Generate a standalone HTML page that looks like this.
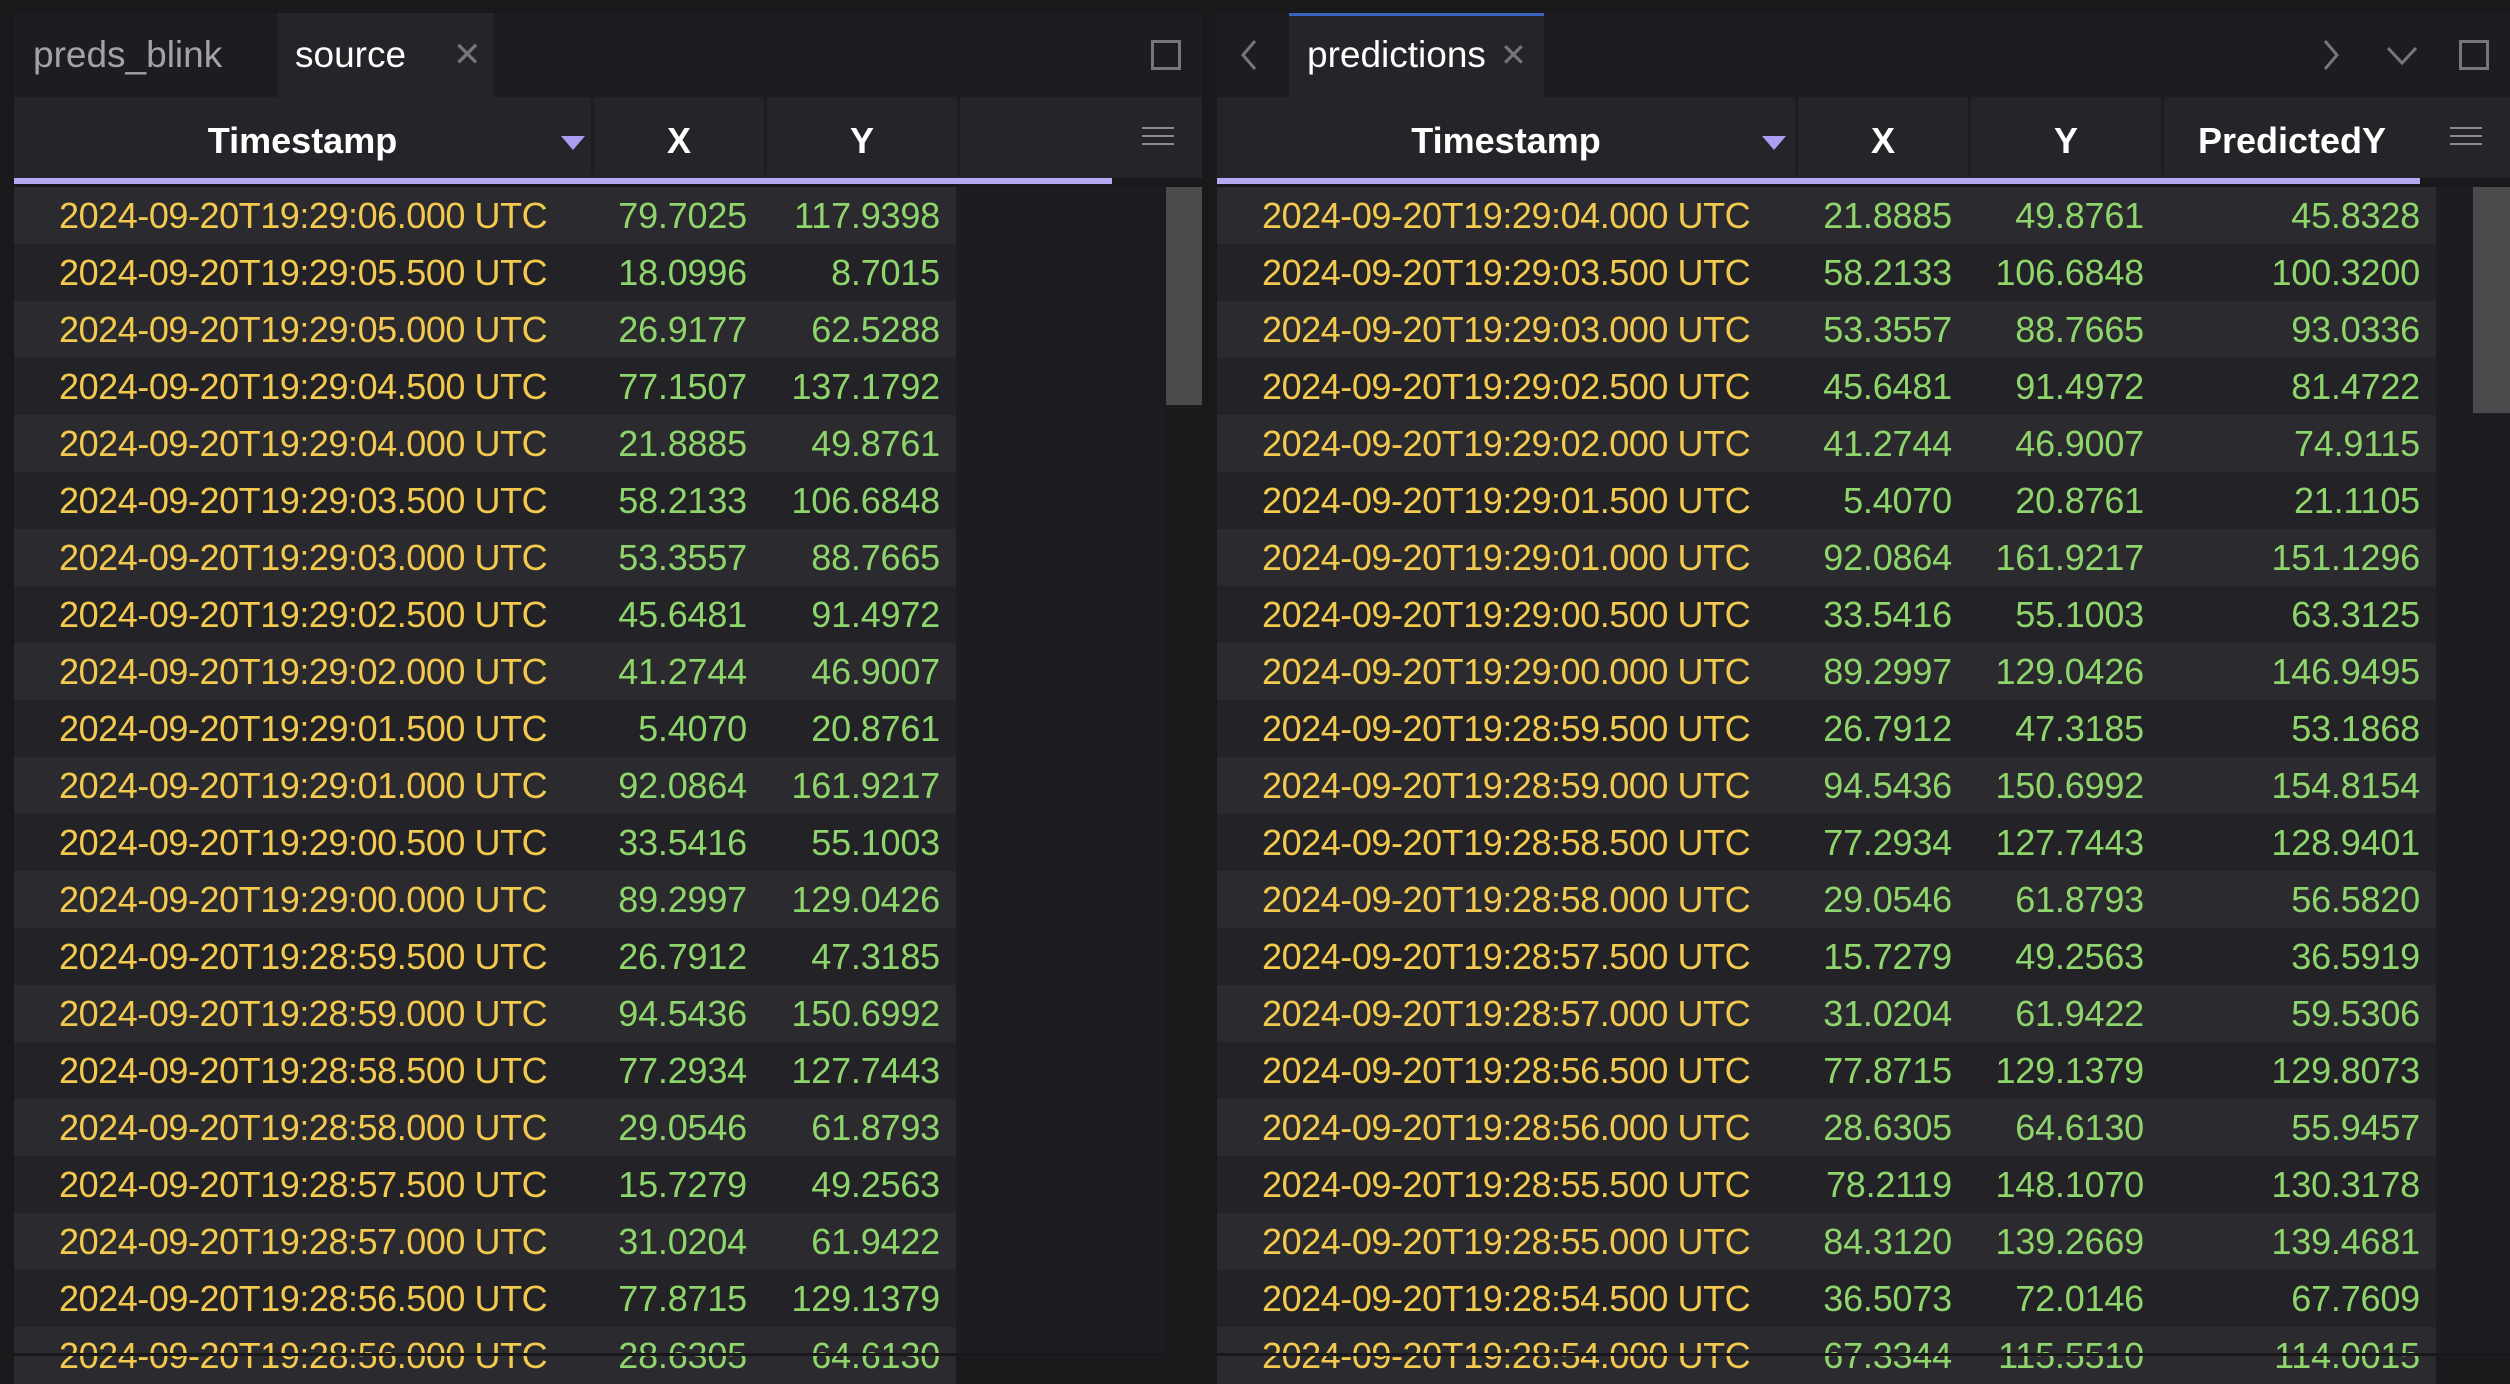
<!DOCTYPE html>
<html><head><meta charset="utf-8"><style>
*{margin:0;padding:0;box-sizing:border-box}
body{width:2510px;height:1356px;background:#19181b;overflow:hidden;font-family:"Liberation Sans",sans-serif;position:relative}
.abs{position:absolute}
.tabrow{top:13px;height:84px;background:#1d1c20}
.tab{top:0;height:84px;line-height:84px;font-size:37px;color:#a3a2a6}
.hdr{top:97px;height:81px;background:#252428}
.hc{position:absolute;top:0;height:78px;line-height:88px;text-align:center;color:#fff;font-weight:bold;font-size:36px;background:#252428;overflow:hidden}
.sep{position:absolute;top:0;width:3px;height:78px;background:#1d1c20}
.lav{position:absolute;top:178px;height:6px;background:#b3a9f2}
.tri{position:absolute;top:136px;width:0;height:0;border-left:12px solid transparent;border-right:12px solid transparent;border-top:14px solid #a99ef0}
.rows{top:187px}
.r{height:57px;line-height:57px;font-size:36px;position:relative;white-space:nowrap}
.r:nth-child(odd){background:#2b2a2e}
.r:nth-child(even){background:#232226}
.r span{position:absolute;top:0}
.t{color:#f3c94e;letter-spacing:-0.45px}
.n{color:#8ed66b;text-align:right;letter-spacing:-0.2px}
.ham{position:absolute;width:32px;height:2px;background:#8a898d}
</style></head><body>
<!-- LEFT PANEL -->
<div class="abs tabrow" style="left:14px;width:1188px"></div>
<div class="abs" style="left:14px;top:13px;width:264px;height:84px;background:#1d1c20"></div>
<div class="abs tab" style="left:33px;top:13px">preds_blink</div>
<div class="abs" style="left:278px;top:13px;width:216px;height:84px;background:#252428"></div>
<div class="abs tab" style="left:295px;top:13px;color:#fff">source</div>
<div class="abs tab" style="left:453px;top:13px;color:#77767a;font-size:34px">✕</div>
<div class="abs" style="left:1151px;top:40px;width:30px;height:30px;border:3px solid #77767a"></div>

<div class="abs hdr" style="left:14px;width:1188px">
<div class="hc" style="left:0;width:577px">Timestamp</div>
<div class="sep" style="left:577px"></div>
<div class="hc" style="left:580px;width:170px">X</div>
<div class="sep" style="left:750px"></div>
<div class="hc" style="left:753px;width:190px">Y</div>
<div class="sep" style="left:943px"></div>
<div class="hc" style="left:946px;width:152px"></div>
</div>
<div class="tri" style="left:561px"></div>
<div class="ham" style="left:1142px;top:127px"></div>
<div class="ham" style="left:1142px;top:135px"></div>
<div class="ham" style="left:1142px;top:143px"></div>
<div class="lav" style="left:14px;width:1098px"></div>
<div class="abs" style="left:956px;top:187px;width:246px;height:1170px;background:#1d1c20"></div>
<div class="abs" style="left:1163px;top:187px;width:39px;height:1170px;background:#1b1a1d"></div>
<div class="abs" style="left:1166px;top:187px;width:36px;height:218px;background:#4b4a4d"></div>

<div class="abs rows" style="left:14px;width:942px">
<div class="r"><span class="t" style="left:45px">2024-09-20T19:29:06.000 UTC</span><span class="n" style="right:209px">79.7025</span><span class="n" style="right:16px">117.9398</span></div>
<div class="r"><span class="t" style="left:45px">2024-09-20T19:29:05.500 UTC</span><span class="n" style="right:209px">18.0996</span><span class="n" style="right:16px">8.7015</span></div>
<div class="r"><span class="t" style="left:45px">2024-09-20T19:29:05.000 UTC</span><span class="n" style="right:209px">26.9177</span><span class="n" style="right:16px">62.5288</span></div>
<div class="r"><span class="t" style="left:45px">2024-09-20T19:29:04.500 UTC</span><span class="n" style="right:209px">77.1507</span><span class="n" style="right:16px">137.1792</span></div>
<div class="r"><span class="t" style="left:45px">2024-09-20T19:29:04.000 UTC</span><span class="n" style="right:209px">21.8885</span><span class="n" style="right:16px">49.8761</span></div>
<div class="r"><span class="t" style="left:45px">2024-09-20T19:29:03.500 UTC</span><span class="n" style="right:209px">58.2133</span><span class="n" style="right:16px">106.6848</span></div>
<div class="r"><span class="t" style="left:45px">2024-09-20T19:29:03.000 UTC</span><span class="n" style="right:209px">53.3557</span><span class="n" style="right:16px">88.7665</span></div>
<div class="r"><span class="t" style="left:45px">2024-09-20T19:29:02.500 UTC</span><span class="n" style="right:209px">45.6481</span><span class="n" style="right:16px">91.4972</span></div>
<div class="r"><span class="t" style="left:45px">2024-09-20T19:29:02.000 UTC</span><span class="n" style="right:209px">41.2744</span><span class="n" style="right:16px">46.9007</span></div>
<div class="r"><span class="t" style="left:45px">2024-09-20T19:29:01.500 UTC</span><span class="n" style="right:209px">5.4070</span><span class="n" style="right:16px">20.8761</span></div>
<div class="r"><span class="t" style="left:45px">2024-09-20T19:29:01.000 UTC</span><span class="n" style="right:209px">92.0864</span><span class="n" style="right:16px">161.9217</span></div>
<div class="r"><span class="t" style="left:45px">2024-09-20T19:29:00.500 UTC</span><span class="n" style="right:209px">33.5416</span><span class="n" style="right:16px">55.1003</span></div>
<div class="r"><span class="t" style="left:45px">2024-09-20T19:29:00.000 UTC</span><span class="n" style="right:209px">89.2997</span><span class="n" style="right:16px">129.0426</span></div>
<div class="r"><span class="t" style="left:45px">2024-09-20T19:28:59.500 UTC</span><span class="n" style="right:209px">26.7912</span><span class="n" style="right:16px">47.3185</span></div>
<div class="r"><span class="t" style="left:45px">2024-09-20T19:28:59.000 UTC</span><span class="n" style="right:209px">94.5436</span><span class="n" style="right:16px">150.6992</span></div>
<div class="r"><span class="t" style="left:45px">2024-09-20T19:28:58.500 UTC</span><span class="n" style="right:209px">77.2934</span><span class="n" style="right:16px">127.7443</span></div>
<div class="r"><span class="t" style="left:45px">2024-09-20T19:28:58.000 UTC</span><span class="n" style="right:209px">29.0546</span><span class="n" style="right:16px">61.8793</span></div>
<div class="r"><span class="t" style="left:45px">2024-09-20T19:28:57.500 UTC</span><span class="n" style="right:209px">15.7279</span><span class="n" style="right:16px">49.2563</span></div>
<div class="r"><span class="t" style="left:45px">2024-09-20T19:28:57.000 UTC</span><span class="n" style="right:209px">31.0204</span><span class="n" style="right:16px">61.9422</span></div>
<div class="r"><span class="t" style="left:45px">2024-09-20T19:28:56.500 UTC</span><span class="n" style="right:209px">77.8715</span><span class="n" style="right:16px">129.1379</span></div>
<div class="r"><span class="t" style="left:45px">2024-09-20T19:28:56.000 UTC</span><span class="n" style="right:209px">28.6305</span><span class="n" style="right:16px">64.6130</span></div>
</div>

<!-- RIGHT PANEL -->
<div class="abs tabrow" style="left:1217px;width:1293px"></div>
<div class="abs" style="left:1289px;top:13px;width:255px;height:84px;background:#252428"></div>
<div class="abs" style="left:1289px;top:13px;width:255px;height:3px;background:#3c62c0"></div>
<div class="abs tab" style="left:1307px;top:13px;color:#fff">predictions</div>
<div class="abs tab" style="left:1500px;top:13px;color:#77767a;font-size:32px">✕</div>
<svg class="abs" style="left:1235px;top:38px" width="30" height="34"><path d="M20 3 L8 17 L20 31" fill="none" stroke="#77767a" stroke-width="3"/></svg>
<svg class="abs" style="left:2315px;top:38px" width="30" height="34"><path d="M10 3 L22 17 L10 31" fill="none" stroke="#77767a" stroke-width="3"/></svg>
<svg class="abs" style="left:2385px;top:45px" width="34" height="22"><path d="M3 3 L17 18 L31 3" fill="none" stroke="#77767a" stroke-width="3"/></svg>
<div class="abs" style="left:2459px;top:40px;width:30px;height:30px;border:3px solid #77767a"></div>

<div class="abs hdr" style="left:1217px;width:1293px">
<div class="hc" style="left:0;width:578px">Timestamp</div>
<div class="sep" style="left:578px"></div>
<div class="hc" style="left:581px;width:170px">X</div>
<div class="sep" style="left:751px"></div>
<div class="hc" style="left:754px;width:190px">Y</div>
<div class="sep" style="left:944px"></div>
<div class="hc" style="left:947px;width:256px">PredictedY</div>
</div>
<div class="tri" style="left:1762px"></div>
<div class="ham" style="left:2450px;top:127px"></div>
<div class="ham" style="left:2450px;top:135px"></div>
<div class="ham" style="left:2450px;top:143px"></div>
<div class="lav" style="left:1217px;width:1203px"></div>
<div class="abs" style="left:2436px;top:187px;width:74px;height:1170px;background:#1d1c20"></div>
<div class="abs" style="left:2473px;top:187px;width:37px;height:226px;background:#4b4a4d"></div>

<div class="abs rows" style="left:1217px;width:1219px">
<div class="r"><span class="t" style="left:45px">2024-09-20T19:29:04.000 UTC</span><span class="n" style="right:484px">21.8885</span><span class="n" style="right:292px">49.8761</span><span class="n" style="right:16px">45.8328</span></div>
<div class="r"><span class="t" style="left:45px">2024-09-20T19:29:03.500 UTC</span><span class="n" style="right:484px">58.2133</span><span class="n" style="right:292px">106.6848</span><span class="n" style="right:16px">100.3200</span></div>
<div class="r"><span class="t" style="left:45px">2024-09-20T19:29:03.000 UTC</span><span class="n" style="right:484px">53.3557</span><span class="n" style="right:292px">88.7665</span><span class="n" style="right:16px">93.0336</span></div>
<div class="r"><span class="t" style="left:45px">2024-09-20T19:29:02.500 UTC</span><span class="n" style="right:484px">45.6481</span><span class="n" style="right:292px">91.4972</span><span class="n" style="right:16px">81.4722</span></div>
<div class="r"><span class="t" style="left:45px">2024-09-20T19:29:02.000 UTC</span><span class="n" style="right:484px">41.2744</span><span class="n" style="right:292px">46.9007</span><span class="n" style="right:16px">74.9115</span></div>
<div class="r"><span class="t" style="left:45px">2024-09-20T19:29:01.500 UTC</span><span class="n" style="right:484px">5.4070</span><span class="n" style="right:292px">20.8761</span><span class="n" style="right:16px">21.1105</span></div>
<div class="r"><span class="t" style="left:45px">2024-09-20T19:29:01.000 UTC</span><span class="n" style="right:484px">92.0864</span><span class="n" style="right:292px">161.9217</span><span class="n" style="right:16px">151.1296</span></div>
<div class="r"><span class="t" style="left:45px">2024-09-20T19:29:00.500 UTC</span><span class="n" style="right:484px">33.5416</span><span class="n" style="right:292px">55.1003</span><span class="n" style="right:16px">63.3125</span></div>
<div class="r"><span class="t" style="left:45px">2024-09-20T19:29:00.000 UTC</span><span class="n" style="right:484px">89.2997</span><span class="n" style="right:292px">129.0426</span><span class="n" style="right:16px">146.9495</span></div>
<div class="r"><span class="t" style="left:45px">2024-09-20T19:28:59.500 UTC</span><span class="n" style="right:484px">26.7912</span><span class="n" style="right:292px">47.3185</span><span class="n" style="right:16px">53.1868</span></div>
<div class="r"><span class="t" style="left:45px">2024-09-20T19:28:59.000 UTC</span><span class="n" style="right:484px">94.5436</span><span class="n" style="right:292px">150.6992</span><span class="n" style="right:16px">154.8154</span></div>
<div class="r"><span class="t" style="left:45px">2024-09-20T19:28:58.500 UTC</span><span class="n" style="right:484px">77.2934</span><span class="n" style="right:292px">127.7443</span><span class="n" style="right:16px">128.9401</span></div>
<div class="r"><span class="t" style="left:45px">2024-09-20T19:28:58.000 UTC</span><span class="n" style="right:484px">29.0546</span><span class="n" style="right:292px">61.8793</span><span class="n" style="right:16px">56.5820</span></div>
<div class="r"><span class="t" style="left:45px">2024-09-20T19:28:57.500 UTC</span><span class="n" style="right:484px">15.7279</span><span class="n" style="right:292px">49.2563</span><span class="n" style="right:16px">36.5919</span></div>
<div class="r"><span class="t" style="left:45px">2024-09-20T19:28:57.000 UTC</span><span class="n" style="right:484px">31.0204</span><span class="n" style="right:292px">61.9422</span><span class="n" style="right:16px">59.5306</span></div>
<div class="r"><span class="t" style="left:45px">2024-09-20T19:28:56.500 UTC</span><span class="n" style="right:484px">77.8715</span><span class="n" style="right:292px">129.1379</span><span class="n" style="right:16px">129.8073</span></div>
<div class="r"><span class="t" style="left:45px">2024-09-20T19:28:56.000 UTC</span><span class="n" style="right:484px">28.6305</span><span class="n" style="right:292px">64.6130</span><span class="n" style="right:16px">55.9457</span></div>
<div class="r"><span class="t" style="left:45px">2024-09-20T19:28:55.500 UTC</span><span class="n" style="right:484px">78.2119</span><span class="n" style="right:292px">148.1070</span><span class="n" style="right:16px">130.3178</span></div>
<div class="r"><span class="t" style="left:45px">2024-09-20T19:28:55.000 UTC</span><span class="n" style="right:484px">84.3120</span><span class="n" style="right:292px">139.2669</span><span class="n" style="right:16px">139.4681</span></div>
<div class="r"><span class="t" style="left:45px">2024-09-20T19:28:54.500 UTC</span><span class="n" style="right:484px">36.5073</span><span class="n" style="right:292px">72.0146</span><span class="n" style="right:16px">67.7609</span></div>
<div class="r"><span class="t" style="left:45px">2024-09-20T19:28:54.000 UTC</span><span class="n" style="right:484px">67.3344</span><span class="n" style="right:292px">115.5510</span><span class="n" style="right:16px">114.0015</span></div>
</div>
<div class="abs" style="left:0;top:1353px;width:2510px;height:3px;background:#19181b"></div>
</body></html>
